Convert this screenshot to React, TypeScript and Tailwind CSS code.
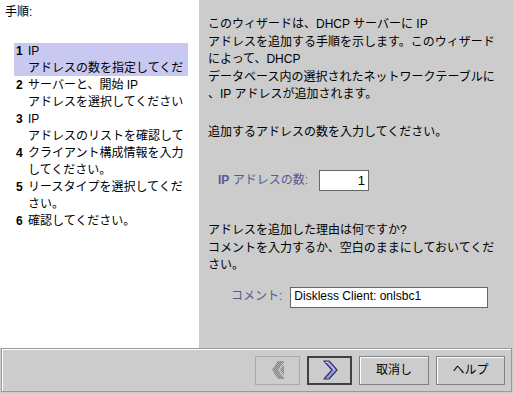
import React from "react";

const STEPS = [
  { n: "1", lines: ["IP", "アドレスの数を指定してくだ"], active: true },
  { n: "2", lines: ["サーバーと、開始 IP", "アドレスを選択してください"] },
  { n: "3", lines: ["IP", "アドレスのリストを確認して"] },
  { n: "4", lines: ["クライアント構成情報を入力", "してください。"] },
  { n: "5", lines: ["リースタイプを選択してくだ", "さい。"] },
  { n: "6", lines: ["確認してください。"] },
];

const FONT = { fontFamily: '"Liberation Sans", "Noto Sans CJK JP", sans-serif' };

export default function App() {
  return (
    <div className="flex h-[393px] w-[513px] flex-col overflow-hidden bg-[#cccccc] text-[12px] text-black" style={FONT}>
      <div className="flex h-[348px]">
        {/* 手順 */}
        <div className="w-[199px] overflow-hidden bg-white pl-[5px] pt-[4px]">
          <div className="leading-[17px]">手順:</div>
          <div className="mt-[22px] flex flex-col gap-[1px]">
            {STEPS.map((s) => (
              <div
                key={s.n}
                className={`ml-[9px] flex w-[174px] whitespace-nowrap pl-[2px] leading-[16.5px] ${s.active ? "bg-[#c8c8f0]" : ""}`}
              >
                <span className="w-[12px] shrink-0 font-bold">{s.n}</span>
                <div className="overflow-hidden">
                  {s.lines.map((l) => (
                    <div key={l}>{l}</div>
                  ))}
                </div>
              </div>
            ))}
          </div>
        </div>

        {/* 本文 */}
        <div className="flex-1 pl-[9px] pt-[16px] leading-[17.5px]">
          <div>
            <div>このウィザードは、DHCP サーバーに IP</div>
            <div>アドレスを追加する手順を示します。このウィザード</div>
            <div>によって、DHCP</div>
            <div>データベース内の選択されたネットワークテーブルに</div>
            <div>、IP アドレスが追加されます。</div>
          </div>
          <div className="mt-[20px]">追加するアドレスの数を入力してください。</div>
          <div className="mt-[29px] flex items-center pl-[10px]">
            <span className="text-[#5a5a8c]">
              <span className="font-bold">IP</span> アドレスの数:
            </span>
            <div className="ml-[11px] flex h-[21px] w-[50px] items-center justify-end border border-[#666666] bg-white pr-[3px] text-[13px]">
              1
            </div>
          </div>
          <div className="mt-[31px]">
            <div>アドレスを追加した理由は何ですか?</div>
            <div>コメントを入力するか、空白のままにしておいてくだ</div>
            <div>さい。</div>
          </div>
          <div className="mt-[12px] flex items-center pl-[23px]">
            <span className="text-[#5a5a8c]">コメント:</span>
            <div className="ml-[8px] flex h-[21px] w-[198px] items-center border border-[#666666] bg-white pl-[3px] text-[12px]">
              Diskless Client: onlsbc1
            </div>
          </div>
        </div>
      </div>

      {/* ボタン */}
      <div className="px-[1px] pb-[1px]">
        <div className="flex h-[44px] items-center justify-end gap-[7px] border border-[#999999] pr-[6px] shadow-[inset_1px_1px_0_#ffffff]">
          <button className="flex h-[29px] w-[45px] items-center justify-center border border-[#aaaaaa]">
            <svg width="14" height="20" viewBox="0 0 14 20">
              <defs>
                <pattern id="dots" width="2" height="2" patternUnits="userSpaceOnUse">
                  <rect width="2" height="2" fill="#b0b0b0" />
                  <rect width="1" height="1" fill="#808080" />
                  <rect x="1" y="1" width="1" height="1" fill="#808080" />
                </pattern>
              </defs>
              <path d="M1 10 L7 1 H13 V19 H7 Z" fill="url(#dots)" />
              <path d="M13 3 L8 10 L13 17" fill="none" stroke="#c8c8c8" strokeWidth="1.5" />
            </svg>
          </button>
          <button className="flex h-[29px] w-[45px] items-center justify-center border-2 border-[#404040]">
            <svg width="16" height="20" viewBox="0 0 16 20">
              <path d="M2 1 H7 L15 10 L7 19 H2 L10 10 Z" fill="#9999ee" stroke="#333366" strokeWidth="1.2" strokeLinejoin="round" />
              <path d="M3.5 2.5 H6.5 L13 10" fill="none" stroke="#ccccff" strokeWidth="1" />
            </svg>
          </button>
          <button className="h-[29px] w-[70px] border border-[#808080] shadow-[inset_1px_1px_0_#ffffff]">取消し</button>
          <button className="h-[29px] w-[69px] border border-[#808080] shadow-[inset_1px_1px_0_#ffffff]">ヘルプ</button>
        </div>
      </div>
    </div>
  );
}
